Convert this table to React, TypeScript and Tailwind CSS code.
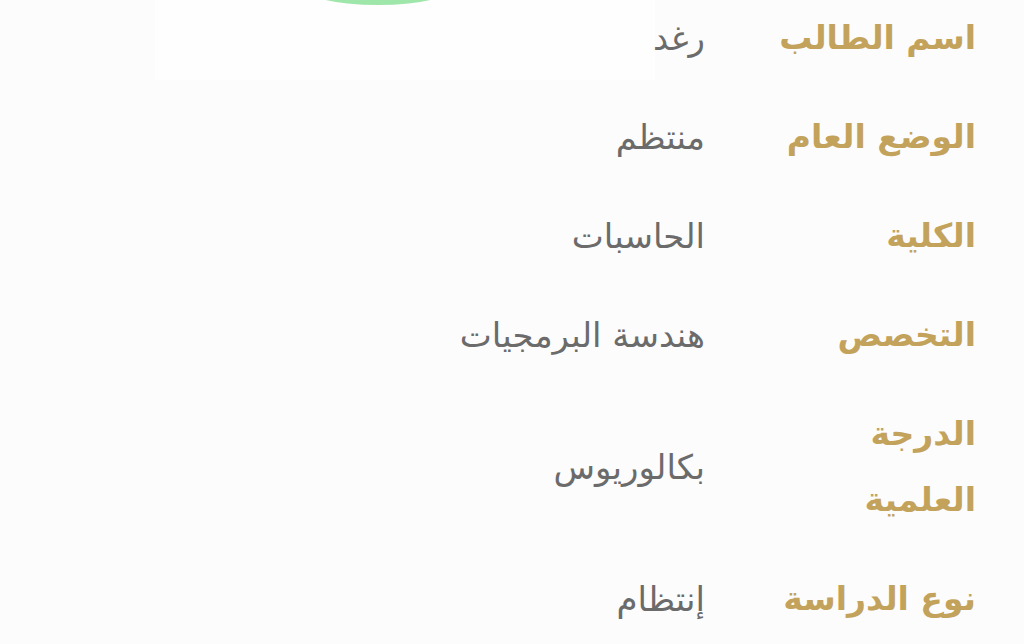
import React from "react";

const ROWS = [
  { label: "اسم الطالب", value: "رغد" },
  { label: "الوضع العام", value: "منتظم" },
  { label: "الكلية", value: "الحاسبات" },
  { label: "التخصص", value: "هندسة البرمجيات" },
  { label: "الدرجة العلمية", value: "بكالوريوس" },
  { label: "نوع الدراسة", value: "إنتظام" },
];

export default function App() {
  return (
    <div
      dir="rtl"
      className="relative w-[1024px] h-[644px] overflow-hidden bg-[#fcfcfc]"
      style={{ fontFamily: '"DejaVu Sans", "Noto Sans", sans-serif' }}
    >
      {/* faded card behind the top row */}
      <div className="absolute left-[155px] top-[-20px] w-[500px] h-[100px] bg-[#fefefe]" />
      {/* bottom of the green avatar ring */}
      <div className="absolute left-[298px] top-[-36px] w-[160px] h-[41px] rounded-[50%] bg-[#9fe6ab]" />

      <div className="relative flex flex-col gap-[33px] pt-[5px] pr-[48px]">
        {ROWS.map((row) => (
          <div key={row.label} className="flex items-center">
            <div className="w-[200px] ml-[71px] shrink-0 text-[33px] leading-[66px] font-bold text-[#c3a35c]">
              {row.label}
            </div>
            <div className="text-[34px] leading-[66px] text-[#6b6b6b]">{row.value}</div>
          </div>
        ))}
      </div>
    </div>
  );
}
